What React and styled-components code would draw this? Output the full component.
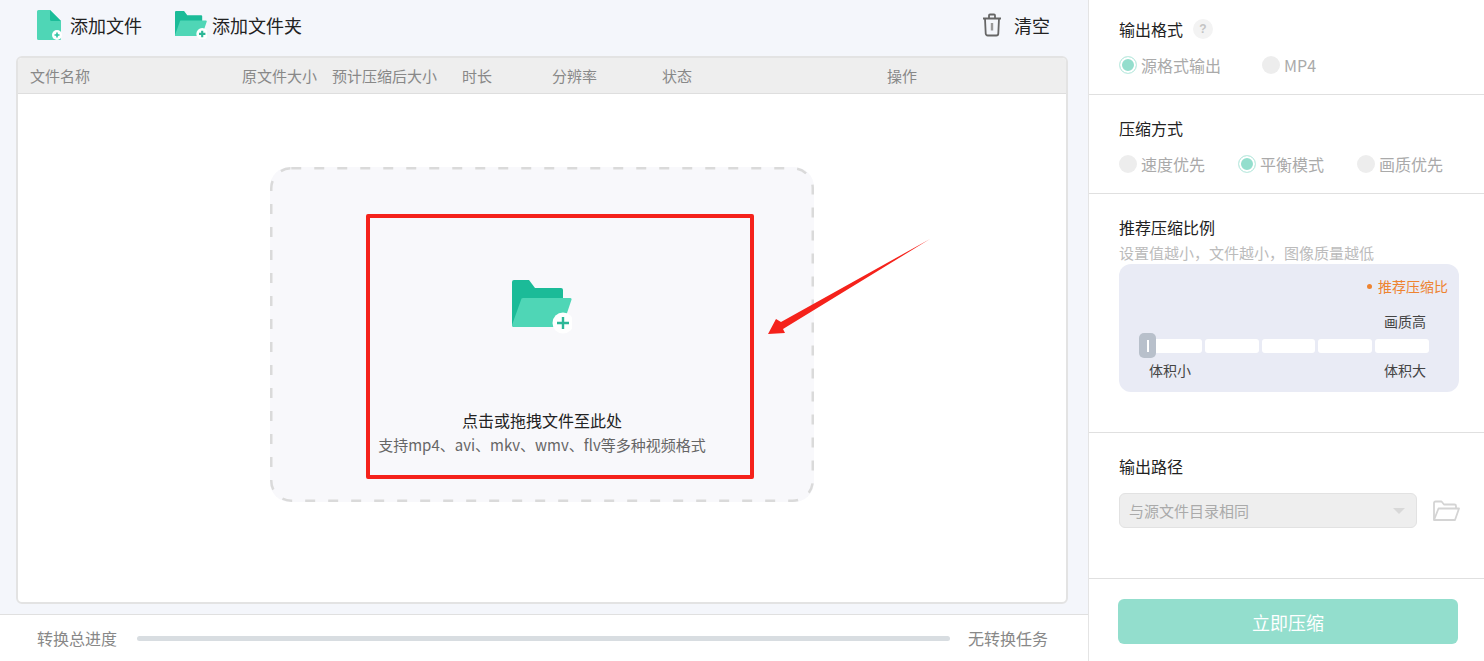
import React from 'react';
import styled, { createGlobalStyle } from 'styled-components';

const GlobalStyle = createGlobalStyle`
  html, body { margin: 0; padding: 0; height: 100%; overflow: hidden; }
  #root { height: 100%; }
  * { box-sizing: border-box; }
  body { font-family: "Noto Sans CJK SC", "Liberation Sans", sans-serif; color: #222; }
`;

const Page = styled.div`
  display: flex;
  height: 100vh;
  background: #fff;
`;

const Main = styled.div`
  width: 1088px;
  flex: none;
  display: flex;
  flex-direction: column;
  background: #f4f6fb;
`;

const Toolbar = styled.div`
  height: 50px;
  margin-bottom: 6px;
  padding: 0 38px 0 36px;
  display: flex;
  align-items: center;
`;

const ToolButton = styled.div`
  display: flex;
  align-items: center;
  gap: ${p => p.$gap}px;
  margin-right: ${p => p.$mr || 0}px;
  margin-left: ${p => (p.$right ? 'auto' : 0)};
  font-size: 18px;
  line-height: 26px;
  color: #222;
`;

const Table = styled.div`
  flex: 1;
  margin: 0 20px 0 16px;
  display: flex;
  flex-direction: column;
  border: 2px solid #e3e3e3;
  border-radius: 6px;
  background: #fff;
  min-height: 0;
`;

const TableHead = styled.div`
  height: 36px;
  flex: none;
  padding-left: 12px;
  display: grid;
  grid-template-columns: 212px 90px 130px 90px 110px 225px 1fr;
  align-items: center;
  background: #eee;
  border-bottom: 1px solid #dedede;
  border-radius: 4px 4px 0 0;
  font-size: 15px;
  color: #888;
  white-space: nowrap;
`;

const TableBody = styled.div`
  flex: 1;
  display: flex;
  justify-content: center;
  padding: 73px 0 0 0;
`;

const DropZone = styled.div`
  position: relative;
  width: 544px;
  height: 335px;
  display: flex;
  flex-direction: column;
  align-items: center;
  padding-top: 113px;
  background: #f8f8fb;
  border-radius: 20px;
`;

const DashedEdge = styled.svg`
  position: absolute;
  left: 0;
  top: 0;
`;

const DropTitle = styled.div`
  margin-top: 74px;
  font-size: 16px;
  line-height: 24px;
  color: #222;
`;

const DropHint = styled.div`
  margin-top: 1px;
  font-size: 15px;
  line-height: 24px;
  color: #666;
  white-space: nowrap;
`;

const Highlight = styled.div`
  position: absolute;
  left: 96px;
  top: 47px;
  width: 388px;
  height: 265px;
  border: 4px solid #f5221b;
  border-radius: 2px;
`;

const Arrow = styled.svg`
  position: absolute;
  left: 498px;
  top: 67px;
`;

const ProgressBar = styled.div`
  height: 47px;
  flex: none;
  margin-top: 10px;
  padding: 0 40px 0 37px;
  display: flex;
  align-items: center;
  gap: 20px;
  background: #fff;
  border-top: 1px solid #e0e0e0;
  font-size: 16px;
  color: #888;
`;

const ProgressTrack = styled.div`
  flex: 1;
  height: 5px;
  margin-right: -2px;
  background: #d8dde1;
  border-radius: 3px;
`;

const Side = styled.div`
  flex: 1;
  display: flex;
  flex-direction: column;
  border-left: 1px solid #e4e4e4;
`;

const Section = styled.div`
  height: ${p => p.$h}px;
  flex: none;
  padding: ${p => p.$pt}px 25px 0 30px;
  border-bottom: ${p => (p.$last ? 'none' : '1px solid #e0e0e0')};
`;

const TitleRow = styled.div`
  display: flex;
  align-items: center;
  gap: 10px;
  height: 22px;
  font-size: 16px;
  color: #222;
`;

const HelpDot = styled.span`
  width: 20px;
  height: 20px;
  border-radius: 50%;
  background: #f3f3f3;
  color: #c4c4c4;
  font: bold 12px/20px "Liberation Sans", sans-serif;
  text-align: center;
`;

const RadioRow = styled.div`
  display: flex;
  gap: ${p => p.$gap}px;
  height: 22px;
  margin-top: 14px;
`;

const RadioOption = styled.div`
  display: flex;
  align-items: center;
  gap: 4px;
  font-size: 16px;
  color: #aaa;
  white-space: nowrap;
`;

const RadioDot = styled.span`
  width: 18px;
  height: 18px;
  border-radius: 50%;
  background: ${p => (p.$on ? '#93decd' : '#ededed')};
  border: ${p => (p.$on ? '1px solid #c4ece3' : 'none')};
  box-shadow: ${p => (p.$on ? 'inset 0 0 0 2px #fff' : 'none')};
`;

const Hint = styled.div`
  height: 22px;
  margin-top: 4px;
  font-size: 15px;
  line-height: 22px;
  color: #bbb;
  white-space: nowrap;
`;

const RatioPanel = styled.div`
  width: 340px;
  height: 128px;
  display: flex;
  flex-direction: column;
  padding: 12px 11px 0 29px;
  background: #e9ebf5;
  border-radius: 12px;
`;

const Recommend = styled.div`
  align-self: flex-end;
  display: flex;
  align-items: center;
  gap: 6px;
  height: 20px;
  font-size: 14px;
  color: #ee8330;

  &::before {
    content: "";
    width: 5px;
    height: 5px;
    border-radius: 50%;
    background: #ee8330;
  }
`;

const ScaleLabel = styled.div`
  display: flex;
  justify-content: ${p => (p.$between ? 'space-between' : 'flex-end')};
  padding: 0 22px 0 1px;
  height: 20px;
  margin-top: ${p => p.$mt}px;
  font-size: 14px;
  line-height: 20px;
  color: #444;
`;

const Track = styled.div`
  position: relative;
  display: flex;
  gap: 3px;
  margin-top: 8px;
  width: 281px;
`;

const Segment = styled.div`
  width: 54px;
  height: 14px;
  background: #fff;
  border-radius: 3px;
`;

const Thumb = styled.div`
  position: absolute;
  left: -9px;
  top: -6px;
  width: 17px;
  height: 25px;
  display: flex;
  align-items: center;
  justify-content: center;
  background: #b8c0cb;
  border-radius: 5px;

  &::after {
    content: "";
    width: 2px;
    height: 12px;
    background: #fff;
  }
`;

const PathRow = styled.div`
  display: flex;
  align-items: center;
  gap: 15px;
  margin-top: 16px;
`;

const PathSelect = styled.div`
  width: 298px;
  height: 35px;
  display: flex;
  align-items: center;
  justify-content: space-between;
  padding: 0 11px 0 9px;
  background: #eee;
  border: 1px solid #e2e2e2;
  border-radius: 6px;
  font-size: 15px;
  color: #aaa;

  &::after {
    content: "";
    border-left: 6px solid transparent;
    border-right: 6px solid transparent;
    border-top: 6px solid #d8d8d8;
  }
`;

const SubmitButton = styled.button`
  display: block;
  width: 340px;
  height: 45px;
  margin: 20px 0 0 -1px;
  border: none;
  border-radius: 6px;
  background: #93decd;
  color: #fff;
  font-family: inherit;
  font-size: 18px;
`;

const FileIcon = () => (
  <svg width="26" height="32" viewBox="0 0 26 32">
    <path d="M1 2.5A1.5 1.5 0 0 1 2.5 1H14l11 11v18a1 1 0 0 1-1 1H2.5A1.5 1.5 0 0 1 1 29.5z" fill="#4fd6b6" />
    <path d="M14 1l11 11H15.5A1.5 1.5 0 0 1 14 10.5z" fill="#1bbd99" />
    <circle cx="21" cy="26" r="5" fill="#fff" />
    <path d="M18.5 26h5M21 23.5v5" stroke="#2cc4a2" strokeWidth="1.6" />
  </svg>
);

const FolderIcon = ({ size = 32, big }) => (
  <svg width={size} height={size * 54 / 60} viewBox="0 0 60 54">
    <path d="M0 2a2 2 0 0 1 2-2h15l6 8h26a2 2 0 0 1 2 2v37H2a2 2 0 0 1-2-2z" fill="#1bbb98" />
    <path d="M9 20a2 2 0 0 1 2-2h47a1.5 1.5 0 0 1 1.4 2L51 45a3 3 0 0 1-3 2H2a2 2 0 0 1-2-2z" fill="#4fd6b6" />
    <circle cx="51" cy="43" r={big ? 10.5 : 11} fill="#fff" />
    <path d="M45 43h12M51 37v12" stroke="#2cb797" strokeWidth={big ? 2.4 : 4} />
  </svg>
);

const TrashIcon = () => (
  <svg width="20" height="24" viewBox="0 0 20 24" fill="none" stroke="#666" strokeWidth="1.8">
    <path d="M1 5.500h18M7 5.500V2.500a1 1 0 0 1 1-1h4a1 1 0 0 1 1 1v3" />
    <path d="M3 5.500l.7 15a2 2 0 0 0 2 2h8.600a2 2 0 0 0 2-2l.7-15" />
    <path d="M10 10v7.500" strokeWidth="2.4" stroke="#999" />
  </svg>
);

const OpenFolderIcon = () => (
  <svg width="28" height="22" viewBox="0 0 28 22" fill="none" stroke="#d4d4d4" strokeWidth="1.8" strokeLinejoin="round">
    <path d="M2 20V3a1.500 1.500 0 0 1 1.500-1.500h6l2.500 3h10.500A1.500 1.500 0 0 1 24 6v2.500" />
    <path d="M2 20l4.500-11.500H27L23 20z" />
  </svg>
);

const columns = ['文件名称', '原文件大小', '预计压缩后大小', '时长', '分辨率', '状态', '操作'];

export default function App() {
  return (
    <Page>
      <GlobalStyle />
      <Main>
        <Toolbar>
          <ToolButton $gap={8} $mr={33}>
            <FileIcon />
            添加文件
          </ToolButton>
          <ToolButton $gap={5}>
            <FolderIcon />
            添加文件夹
          </ToolButton>
          <ToolButton $gap={12} $right>
            <TrashIcon />
            清空
          </ToolButton>
        </Toolbar>
        <Table>
          <TableHead>
            {columns.map(c => <span key={c}>{c}</span>)}
          </TableHead>
          <TableBody>
            <DropZone>
              <DashedEdge width="544" height="335" fill="none">
                <rect x="1.25" y="1.25" width="541.5" height="332.5" rx="20" stroke="#dadada" strokeWidth="2.5" strokeDasharray="10 13" />
              </DashedEdge>
              <FolderIcon size={60} big />
              <DropTitle>点击或拖拽文件至此处</DropTitle>
              <DropHint>支持mp4、avi、mkv、wmv、flv等多种视频格式</DropHint>
              <Highlight />
              <Arrow width="166" height="102" viewBox="0 0 166 102">
                <path d="M162 5L13 88l-5-3-8 15 17-1-2-4z" fill="#f5221b" />
              </Arrow>
            </DropZone>
          </TableBody>
        </Table>
        <ProgressBar>
          转换总进度
          <ProgressTrack />
          无转换任务
        </ProgressBar>
      </Main>
      <Side>
        <Section $h={95} $pt={18}>
          <TitleRow>输出格式<HelpDot>?</HelpDot></TitleRow>
          <RadioRow $gap={41}>
            <RadioOption><RadioDot $on />源格式输出</RadioOption>
            <RadioOption><RadioDot />MP4</RadioOption>
          </RadioRow>
        </Section>
        <Section $h={99} $pt={22}>
          <TitleRow>压缩方式</TitleRow>
          <RadioRow $gap={33}>
            <RadioOption><RadioDot />速度优先</RadioOption>
            <RadioOption><RadioDot $on />平衡模式</RadioOption>
            <RadioOption><RadioDot />画质优先</RadioOption>
          </RadioRow>
        </Section>
        <Section $h={239} $pt={22}>
          <TitleRow>推荐压缩比例</TitleRow>
          <Hint>设置值越小，文件越小，图像质量越低</Hint>
          <RatioPanel>
            <Recommend>推荐压缩比</Recommend>
            <ScaleLabel $mt={15}>画质高</ScaleLabel>
            <Track>
              <Segment /><Segment /><Segment /><Segment /><Segment />
              <Thumb />
            </Track>
            <ScaleLabel $mt={7} $between>
              <span>体积小</span>
              <span>体积大</span>
            </ScaleLabel>
          </RatioPanel>
        </Section>
        <Section $h={146} $pt={22}>
          <TitleRow>输出路径</TitleRow>
          <PathRow>
            <PathSelect>与源文件目录相同</PathSelect>
            <OpenFolderIcon />
          </PathRow>
        </Section>
        <Section $h={82} $pt={0} $last>
          <SubmitButton>立即压缩</SubmitButton>
        </Section>
      </Side>
    </Page>
  );
}
